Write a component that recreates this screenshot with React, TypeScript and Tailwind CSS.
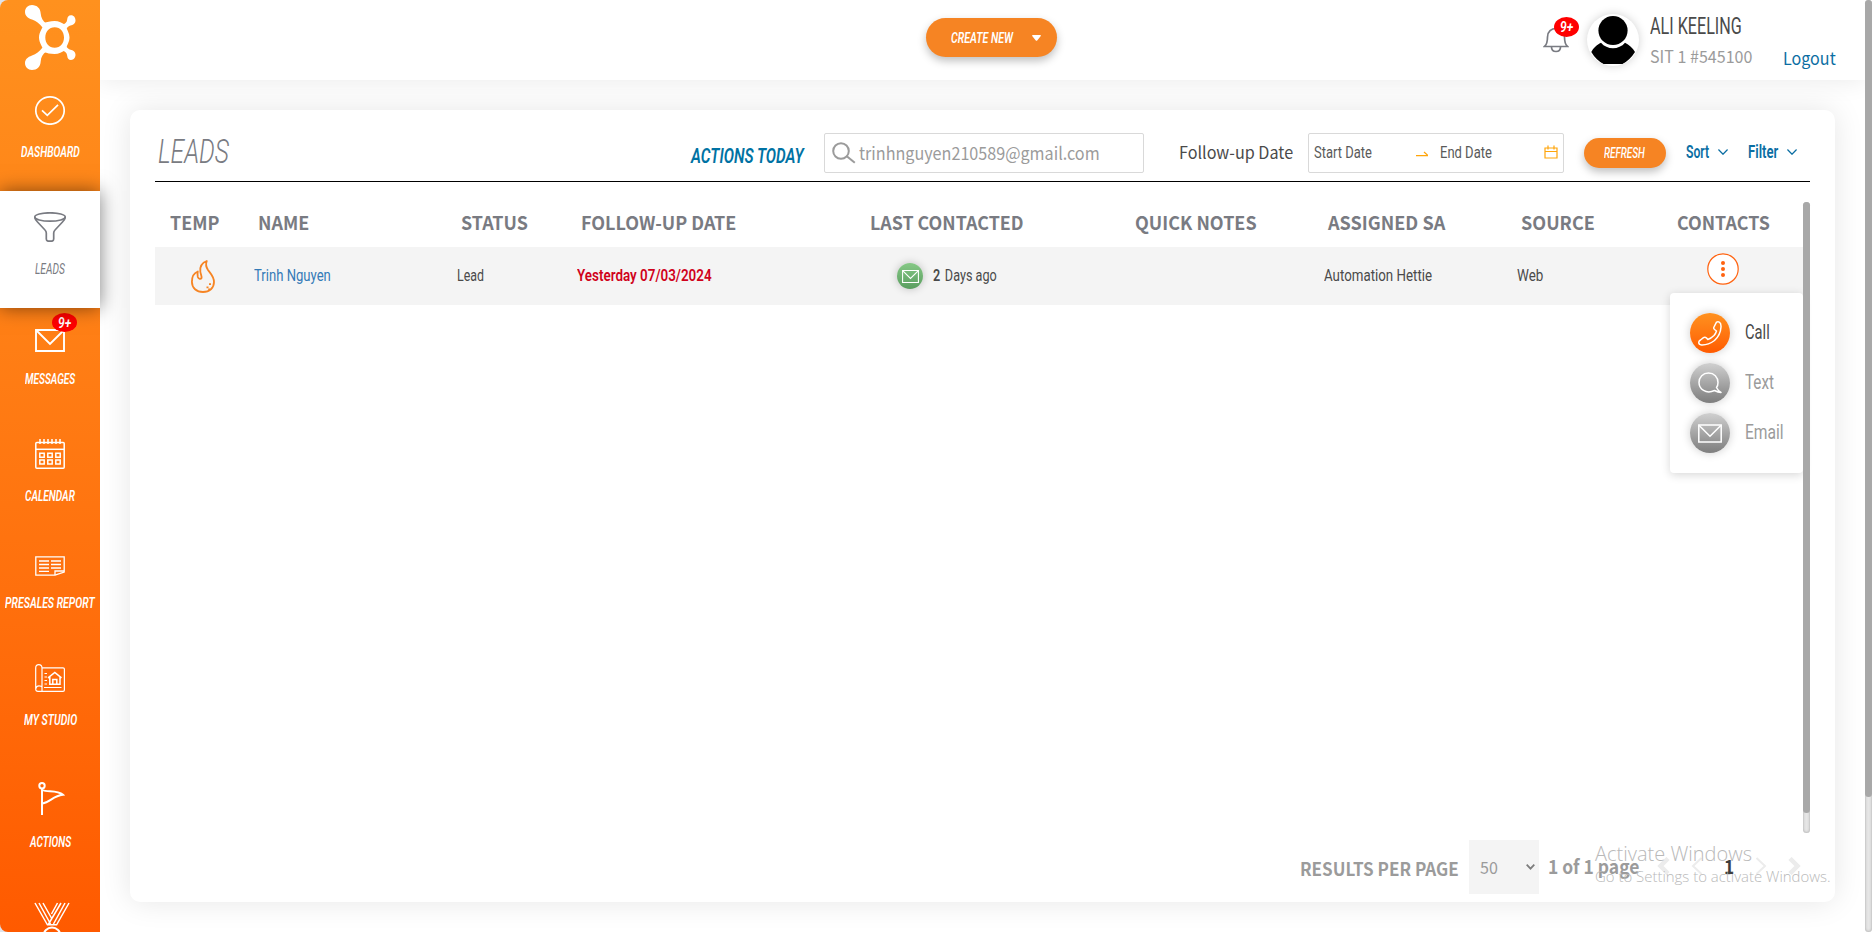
import { useLayoutEffect, useRef, useState } from "react";
import type { ReactNode } from "react";

const COND = "font-['Roboto',sans-serif]";
const SANS = "font-['Noto_Sans_CJK_SC',sans-serif]";

type FitProps = { w: number; className?: string; children: ReactNode };

// Squeezes a line of text horizontally to a given width
function Fit({ w, className = "", children }: FitProps) {
  const ref = useRef<HTMLSpanElement>(null);
  const [scale, setScale] = useState(1);

  useLayoutEffect(() => {
    if (ref.current) setScale(w / ref.current.offsetWidth);
  }, [w]);

  return (
    <span className={`block shrink-0 whitespace-nowrap leading-5 ${className}`} style={{ width: w }}>
      <span ref={ref} className="inline-block origin-left" style={{ transform: `scaleX(${scale})` }}>
        {children}
      </span>
    </span>
  );
}

function Logo() {
  return (
    <svg width="52" height="66" viewBox="0 0 52 66" fill="#fff">
      <path d="M7 0C12 0 15.500 3.500 15.700 8.500C16 13 18 16 21 18.200L17.500 22.500C14.500 18.500 11 16 7 14.600C2.500 13 0 10.500 0 7C0 3 3 0 7 0Z" />
      <path d="M7 65C12 65 15.500 61.500 15.700 56.500C16 52 18 49 21 46.800L17.500 42.500C14.500 46.500 11 49 7 50.400C2.500 52 0 54.500 0 58C0 62 3 65 7 65Z" />
      <path d="M46 10.200C49 10.200 50.500 12.700 50.500 15.500C50.500 18.500 48 20 45.500 20.500C43.500 21 42 22.500 41 24.500L36.500 20C40 19 42 17.500 42.200 14.500C42.400 12 43.500 10.200 46 10.200Z" />
      <path d="M46 55C49 55 50.500 52.300 50.500 49.800C50.500 46.800 48 45.300 45.500 44.800C43.500 44.300 42 42.800 41 40.800L36.500 45.300C40 46.300 42 47.800 42.200 50.800C42.400 53.300 43.500 55 46 55Z" />
      <path
        fillRule="evenodd"
        d="M29.500 16C34 16 37 18 40.500 20C42 25 44.500 28 44.500 32.500C44.500 37 42 40 40.500 45C37 47 34 49 29.500 49C25 49 22 48 19 47C18 42 14 38 14 32.500C14 27 18 23 19 18C22 17 25 16 29.500 16ZM29.700 22.200C24 22.200 20.300 27 20.300 32.500C20.300 38 24 42.800 29.700 42.800C35.400 42.800 39 38 39 32.500C39 27 35.400 22.200 29.700 22.200Z"
      />
    </svg>
  );
}

function DashboardIcon() {
  return (
    <svg width="30" height="30" viewBox="0 0 30 30" fill="none" stroke="#fff" strokeWidth="1.700">
      <ellipse cx="15" cy="15.500" rx="14.200" ry="13.700" />
      <path d="M7 15.300L12.300 20.300L23 9.800" />
    </svg>
  );
}

function FunnelIcon() {
  return (
    <svg width="32" height="30" viewBox="0 0 32 30" fill="none" stroke="#797b82" strokeWidth="1.700" strokeLinejoin="round">
      <ellipse cx="16" cy="5" rx="15.200" ry="4.200" />
      <path d="M.8 5C.8 7.200 2 8.500 3.500 10L11 18Q12.300 19.300 12.300 21V27Q12.300 29.200 14.500 29.200H17.500Q19.700 29.200 19.700 27V21Q19.700 19.300 21 18L28.500 10C30 8.500 31.200 7.200 31.200 5" />
    </svg>
  );
}

function EnvelopeIcon({ width = 30, height = 23 }: { width?: number; height?: number }) {
  return (
    <svg width={width} height={height} viewBox="0 0 30 23" fill="none" stroke="#fff" strokeWidth="1.900">
      <path d="M1 1H29V22H1Z" />
      <path d="M1.500 1.500L15 15L28.500 1.500" />
    </svg>
  );
}

function CalendarIcon() {
  return (
    <svg width="30" height="30" viewBox="0 0 30 30" fill="none" stroke="#fff" strokeWidth="1.500">
      <rect x=".8" y="3.500" width="28.400" height="25.700" rx="1" />
      <path d="M1 10.300H29" />
      <path d="M5 0V5M9 0V5M13 0V5M17 0V5M21 0V5M25 0V5" />
      <path d="M4.800 14.300H9.200V18.200H4.800ZM12.800 14.300H17.200V18.200H12.800ZM20.800 14.300H25.200V18.200H20.800ZM4.800 21H9.200V25H4.800ZM12.800 21H17.200V25H12.800ZM20.800 21H25.200V25H20.800Z" />
    </svg>
  );
}

function ReportIcon() {
  return (
    <svg width="30" height="20" viewBox="0 0 30 20" fill="none" stroke="#fff" strokeWidth="1.300">
      <path d="M.8.800H29.200V16L20 19.200H.8Z" />
      <path d="M20 19V15H29" />
      <path d="M4 5H14M16 5H26M4 8.500H14M16 8.500H26M4 12H14M16 12H26M4 15.300H14" />
    </svg>
  );
}

function StudioIcon() {
  return (
    <svg className="mb-px" width="30" height="28" viewBox="0 0 30 28" fill="none" stroke="#fff" strokeWidth="1.200">
      <path d="M7 3.800H28Q29.400 3.800 29.400 5V26Q29.400 27.300 28 27.300H3Q.7 27.300.7 25V4Q.7.700 3.800.700T7 4V23Q6.500 21.800 4 21.800T.9 24.500" />
      <path d="M7 23V27" />
      <path d="M9.500 9.500H12M9.500 13H12M9.500 16.500H12M9.500 20H12M9 23.500H26.500" />
      <path d="M13 13.800L19.800 8.500L26.500 13.800M14.800 13V20.200H25V13M17.800 20V15.500H21.800V20" strokeWidth="1.500" />
    </svg>
  );
}

function FlagIcon() {
  return (
    <svg width="30" height="33" viewBox="0 0 30 33" fill="none" stroke="#fff" strokeWidth="2">
      <circle cx="7" cy="3.800" r="2.700" />
      <path d="M7 6.500V33M7.500 8C12 10.500 22 7.500 28 12.800C18 13.800 15 20.500 7.500 21.500" />
    </svg>
  );
}

function MedalIcon() {
  return (
    <svg width="36" height="44" viewBox="0 0 36 44" fill="none" stroke="#fff" strokeWidth="1.500">
      <path d="M1 1L13.500 23M5 1L16.500 22M9 1L18 17M35 1L22.500 23M31 1L19.500 22M27 1L14 23M23.500 1L17.500 12M13 22.800H23" />
      <circle cx="18" cy="34" r="8.500" strokeWidth="2" />
    </svg>
  );
}

function Badge({ className = "" }: { className?: string }) {
  return (
    <span className={`absolute flex items-center justify-center rounded-[50%] bg-[#ff0000] text-white ${className}`}>
      <Fit w={13} className={`${COND} text-[14px] font-semibold italic`}>9+</Fit>
    </span>
  );
}

type NavItemProps = { label: string; w: number; className: string; active?: boolean; children: ReactNode };

function NavItem({ label, w, className, active, children }: NavItemProps) {
  return (
    <a
      className={`relative flex w-full shrink-0 flex-col items-center justify-end gap-[17px] pb-[29px] ${className} ${
        active ? "z-10 bg-white text-[#797b82] shadow-[0_0_18px_rgba(0,0,0,0.5)]" : "text-white"
      }`}
    >
      {children}
      <Fit w={w} className={`${COND} text-[15px] italic ${active ? "font-normal" : "font-semibold"}`}>{label}</Fit>
    </a>
  );
}

function Sidebar() {
  return (
    <div className="relative z-20 h-full w-[100px] shrink-0 bg-[#dfe3ea]">
      <nav className="flex h-full flex-col rounded-l-lg bg-linear-to-b from-[#ff911e] to-[#ff5a00]">
        <div className="h-[74px] shrink-0 pt-[5px] pl-[25px]">
          <Logo />
        </div>
        <NavItem label="DASHBOARD" w={59} className="h-[117px]"><DashboardIcon /></NavItem>
        <NavItem label="LEADS" w={30} className="h-[117px]" active><FunnelIcon /></NavItem>
        <NavItem label="MESSAGES" w={50} className="h-[110px]">
          <Badge className="top-[5px] left-[52px] h-[19px] w-[25px]" />
          <EnvelopeIcon />
        </NavItem>
        <NavItem label="CALENDAR" w={50} className="h-[117px]"><CalendarIcon /></NavItem>
        <NavItem label="PRESALES REPORT" w={90} className="h-[107px]"><ReportIcon /></NavItem>
        <NavItem label="MY STUDIO" w={53} className="h-[117px]"><StudioIcon /></NavItem>
        <NavItem label="ACTIONS" w={41} className="h-[122px]"><FlagIcon /></NavItem>
        <div className="min-h-0 flex-1 overflow-hidden pt-[21px] pl-[34px]">
          <MedalIcon />
        </div>
      </nav>
    </div>
  );
}

function Header() {
  return (
    <header className="relative z-10 flex h-20 shrink-0 bg-white pl-[826px] shadow-[0_0_24px_rgba(0,0,0,0.09)]">
      <button className="mt-[18px] flex h-[39px] w-[131px] shrink-0 items-center rounded-full bg-[#f68423] pl-[25px] text-white shadow-[0_4px_8px_rgba(0,0,0,0.25)]">
        <Fit w={62} className={`${COND} text-[15px] font-semibold italic`}>CREATE NEW</Fit>
        <svg className="ml-[19px]" width="9" height="6" viewBox="0 0 9 6" fill="#fff">
          <path d="M.6 0H8.400Q9.200.500 8.600 1.200L5.200 5.500Q4.500 6.200 3.800 5.500L.4 1.200Q-.2.500.6 0Z" />
        </svg>
      </button>
      <div className="relative ml-[486px] w-[44px] shrink-0 pt-[27px]">
        <svg width="26" height="26" viewBox="0 0 26 26" fill="none" stroke="#797b82" strokeWidth="1.700">
          <path d="M1.500 19.500H24.500C21.500 17 21.500 14 21.500 10C21.500 4.500 17.500 1.500 13 1.500S4.500 4.500 4.500 10C4.500 14 4.500 17 1.500 19.500Z" />
          <path d="M8.500 20C8.500 23 10.500 24.500 13 24.500S17.500 23 17.500 20" />
        </svg>
        <Badge className="top-[17px] left-[11px] h-5 w-[25px]" />
      </div>
      <div className="mt-[14px] size-[52px] shrink-0 overflow-hidden rounded-full bg-white shadow-[0_0_10px_rgba(0,0,0,0.18)]">
        <svg width="52" height="52" viewBox="0 0 52 52">
          <circle cx="26" cy="16.500" r="14.600" />
          <path d="M14 28.700C20 36 32 36 38 28.700C42 30.500 46 34.500 48 38Q43 46 35.500 50H16.500Q9 46 4.300 38C6 34.500 10 30.500 14 28.700Z" />
        </svg>
      </div>
      <div className="ml-[11px] w-[133px] shrink-0 pt-[17px]">
        <Fit w={92} className={`${COND} text-[23px] text-[#4a4a4a]`}>ALI KEELING</Fit>
        <Fit w={102} className={`${SANS} mt-[9px] text-[17px] text-[#9b9b9b]`}>SIT 1 #545100</Fit>
      </div>
      <Fit w={53} className={`${SANS} mt-[48px] text-[17px] text-[#0b6ea3]`}>Logout</Fit>
    </header>
  );
}

function Chevron() {
  return (
    <svg width="10" height="6" viewBox="0 0 10 6" fill="none" stroke="#0b6ea3" strokeWidth="1.300">
      <path d="M.4.500L5 5.200L9.600.500" />
    </svg>
  );
}

function Toolbar() {
  return (
    <div className="ml-[25px] flex h-[72px] w-[1655px] shrink-0 border-b border-black">
      <h1 className="w-[536px] shrink-0 pt-[31px] pl-[3px]">
        <Fit w={71} className={`${COND} text-[34px] font-[350] text-[#797b82] italic`}>LEADS</Fit>
      </h1>
      <Fit w={113} className={`${COND} mt-[36px] text-[21px] font-semibold text-[#0072a3] italic`}>ACTIONS TODAY</Fit>
      <div className="mt-[23px] ml-[20px] flex h-10 w-80 shrink-0 rounded-xs border border-[#d9d9d9] pl-[7px]">
        <svg className="mt-2 shrink-0" width="24" height="22" viewBox="0 0 24 22" fill="none" stroke="#9b9b9b" strokeWidth="2">
          <circle cx="9" cy="9" r="7.800" />
          <path d="M14.500 14L22.800 20.800" />
        </svg>
        <Fit w={241} className={`${SANS} mt-[9px] ml-[3px] text-[17.5px] text-[#9b9b9b]`}>trinhnguyen210589@gmail.com</Fit>
      </div>
      <Fit w={114} className={`${SANS} mt-[32px] ml-[35px] text-[17px] text-[#4a4a4a]`}>Follow-up Date</Fit>
      <div className="mt-[23px] ml-[15px] flex h-10 w-64 shrink-0 rounded-xs border border-[#d9d9d9] pl-[5px]">
        <Fit w={58} className={`${COND} mt-[8px] text-[17px] text-[#5a5a5a]`}>Start Date</Fit>
        <svg className="mt-[17px] ml-[44px]" width="12" height="6" viewBox="0 0 12 6" fill="none" stroke="#ffa50a" strokeWidth="1.200">
          <path d="M0 4.600H12L8 1" />
        </svg>
        <Fit w={52} className={`${COND} mt-[8px] ml-[12px] text-[17px] text-[#5a5a5a]`}>End Date</Fit>
        <svg className="mt-[11px] ml-[52px]" width="14" height="14" viewBox="0 0 14 14" fill="none" stroke="#ffa50a" strokeWidth="1.200">
          <path d="M1 3H13V13H1ZM1 6.500H13M4 .500V4.500M10 .500V4.500" />
        </svg>
      </div>
      <button className="mt-[28px] ml-[20px] flex h-[30px] w-[82px] shrink-0 items-center rounded-full bg-[#f68423] pl-[20px] text-white shadow-[0_4px_8px_rgba(0,0,0,0.25)]">
        <Fit w={41} className={`${COND} -mt-px text-[14px] font-medium italic`}>REFRESH</Fit>
      </button>
      <div className="mt-[32px] ml-[20px] flex h-5 items-center text-[#0b6ea3]">
        <Fit w={23} className={`${COND} text-[17.5px] font-semibold`}>Sort</Fit>
        <span className="ml-[9px]"><Chevron /></span>
        <Fit w={30} className={`${COND} ml-[20px] text-[17.5px] font-semibold`}>Filter</Fit>
        <span className="ml-[9px]"><Chevron /></span>
      </div>
    </div>
  );
}

const COLUMNS = [
  { label: "TEMP", w: 49, pad: "pl-[15px]" },
  { label: "NAME", w: 51, pad: "pl-[3px]" },
  { label: "STATUS", w: 67, pad: "pl-[4px]" },
  { label: "FOLLOW-UP DATE", w: 155, pad: "pl-[4px]" },
  { label: "LAST CONTACTED", w: 154, pad: "pl-[5px]" },
  { label: "QUICK NOTES", w: 122, pad: "pl-[5px]" },
  { label: "ASSIGNED SA", w: 117, pad: "pl-[3px]" },
  { label: "SOURCE", w: 74, pad: "pl-[3px]" },
  { label: "CONTACTS", w: 93, pad: "pl-[7px]" },
];

const GRID = "grid grid-cols-[100px_202px_120px_288px_265px_195px_193px_152px_133px]";
const CELL = `${COND} mt-[18px] text-[17px]`;

function ContactMenu() {
  return (
    <div className="absolute top-[46px] right-0 z-10 flex h-[180px] w-[133px] flex-col gap-[10px] rounded bg-white pt-5 pl-5 shadow-[0_2px_10px_rgba(0,0,0,0.16)]">
      <div className="flex items-center gap-[15px]">
        <span className="flex size-10 items-center justify-center rounded-full bg-linear-to-b from-[#ff911e] to-[#ff5a00] shadow-[0_0_10px_rgba(0,0,0,0.2)]">
          <svg width="24" height="25" viewBox="0 0 24 25" fill="none" stroke="#fff" strokeWidth="1.500" strokeLinejoin="round">
            <path d="M18.500 1.200Q20 .400 21.300 1.200Q23.200 2.200 23 6Q22.500 14 16.500 19.500Q10 24.300 3.500 24Q.500 23.500.800 21Q.9 20 2.500 19L5.500 16.700Q7 15.500 8.500 17L9.800 18.500Q13 17.500 16 14.500Q18 12 18.500 10L16.500 8.500Q15.200 7.500 16 6Z" />
          </svg>
        </span>
        <Fit w={25} className={`${COND} -mt-0.5 text-[20px] text-[#4a4a4a]`}>Call</Fit>
      </div>
      <div className="flex items-center gap-[15px]">
        <span className="flex size-10 items-center justify-center rounded-full bg-linear-to-b from-[#d0d0d0] to-[#7e7e7e] shadow-[0_0_10px_rgba(0,0,0,0.2)]">
          <svg width="24" height="22" viewBox="0 0 24 22" fill="none" stroke="#fff" strokeWidth="1.500" strokeLinejoin="round">
            <path d="M23 20.500C20.500 20.300 18.500 19.500 16.500 18.500C8 22.500 1 17 1 10.500C1 5 5 1 10.500 1S20 5 20 10.500C20 12.500 19.500 14.300 18.500 15.500C19.500 17.500 21 19.500 23 20.500Z" />
          </svg>
        </span>
        <Fit w={29} className={`${COND} -mt-0.5 text-[20px] text-[#9b9b9b]`}>Text</Fit>
      </div>
      <div className="flex items-center gap-[15px]">
        <span className="flex size-10 items-center justify-center rounded-full bg-linear-to-b from-[#d0d0d0] to-[#7e7e7e] shadow-[0_0_10px_rgba(0,0,0,0.2)]">
          <EnvelopeIcon width={24} height={19} />
        </span>
        <Fit w={39} className={`${COND} -mt-0.5 text-[20px] text-[#9b9b9b]`}>Email</Fit>
      </div>
    </div>
  );
}

function LeadsTable() {
  return (
    <div className="mt-5 ml-[25px] flex h-[631px] shrink-0">
      <div className="w-[1648px] shrink-0">
        <div className={`${GRID} h-[45px] pt-[10px]`}>
          {COLUMNS.map((col) => (
            <div key={col.label} className={col.pad}>
              <Fit w={col.w} className={`${SANS} text-[19px] font-bold text-[#797b82]`}>{col.label}</Fit>
            </div>
          ))}
        </div>
        <div className={`${GRID} relative h-[58px] bg-[#f4f4f4] text-[#4a4a4a]`}>
          <div className="pt-[13px] pl-[36px]">
            <svg width="24" height="33" viewBox="0 0 24 33" fill="none" stroke="#f68423" strokeWidth="1.800" strokeLinejoin="round">
              <path d="M15.800 1C10.500 3 8.800 7 9.300 11.500C9.600 14.500 11 16 10.500 18C9.800 19.500 7.500 19 6.800 17C6.300 15 6.500 13 6.800 11.500C3 13 .9 17.500.9 21.800C.9 28 5.500 32 12 32S23 28 23 22C23 16.500 20 14 17 10C15 7 14.500 4 15.800 1Z" />
              <path d="M18 24.200H20M15.500 27.300H17.500M17.300 29.500H19" />
            </svg>
          </div>
          <Fit w={77} className={`${CELL} -ml-px text-[#337ab7]`}>Trinh Nguyen</Fit>
          <Fit w={27} className={CELL}>Lead</Fit>
          <Fit w={135} className={`${CELL} font-semibold text-[#d0021b]`}>Yesterday 07/03/2024</Fit>
          <div className="flex pl-8">
            <span className="mt-[16px] flex size-[26px] items-center justify-center rounded-full bg-linear-to-b from-[#86c886] to-[#5a9e60] shadow-[0_0_8px_rgba(0,0,0,0.22)]">
              <EnvelopeIcon width={17} height={13} />
            </span>
            <Fit w={64} className={`${CELL} ml-[10px]`}><b className="mr-0.5 font-semibold">2</b> Days ago</Fit>
          </div>
          <div />
          <Fit w={108} className={`${CELL} -ml-px`}>Automation Hettie</Fit>
          <Fit w={26} className={`${CELL} -ml-px`}>Web</Fit>
          <div className="pt-[6px] pl-[37px]">
            <svg width="32" height="32" viewBox="0 0 32 32">
              <circle cx="16" cy="16" r="15.200" fill="#fff" stroke="#ff6310" strokeWidth="1.200" />
              <g fill="#ff6310">
                <circle cx="16" cy="10" r="2" />
                <circle cx="16" cy="16" r="2" />
                <circle cx="16" cy="22" r="2" />
              </g>
            </svg>
          </div>
          <ContactMenu />
        </div>
      </div>
      <div className="relative z-20 w-[7px] rounded-full bg-[#e6e6e6] shadow-[inset_0_0_3px_rgba(0,0,0,0.3)]">
        <div className="h-[611px] rounded-full bg-[#a8a8a8]" />
      </div>
    </div>
  );
}

function Pagination() {
  return (
    <div className="flex h-[69px] shrink-0 pl-[1170px]">
      <Fit w={159} className={`${SANS} mt-[25px] text-[18px] font-bold text-[#9b9b9b]`}>RESULTS PER PAGE</Fit>
      <div className="mt-[7px] ml-[10px] flex h-[54px] w-[70px] shrink-0 items-center bg-[#f4f4f4] pl-[11px]">
        <Fit w={18} className={`${SANS} text-[17px] text-[#9b9b9b]`}>50</Fit>
        <svg className="ml-[28px]" width="9" height="6" viewBox="0 0 9 6" fill="none" stroke="#7d7d7d" strokeWidth="1.800">
          <path d="M.7.700L4.500 4.600L8.300.700" />
        </svg>
      </div>
      <Fit w={91} className={`${SANS} mt-[23px] ml-[9px] text-[19px] font-bold text-[#9b9b9b]`}>1 of 1 page</Fit>
      <div className="mt-[24px] ml-[18px] flex h-[18px] items-center">
        <svg width="13" height="18" viewBox="0 0 13 18" fill="none" stroke="#ececec" strokeWidth="4.500"><path d="M11 1.500L3.500 9L11 16.500" /></svg>
        <svg className="ml-[21px]" width="12" height="18" viewBox="0 0 12 18" fill="none" stroke="#ececec" strokeWidth="2"><path d="M10.500 1L2 9L10.500 17" /></svg>
        <Fit w={10} className={`${SANS} ml-[21px] text-[19px] font-bold text-[#3c3c3c]`}>1</Fit>
        <svg className="ml-[21px]" width="12" height="18" viewBox="0 0 12 18" fill="none" stroke="#ececec" strokeWidth="2"><path d="M1.500 1L10 9L1.500 17" /></svg>
        <svg className="ml-[21px]" width="13" height="18" viewBox="0 0 13 18" fill="none" stroke="#ececec" strokeWidth="4.500"><path d="M2 1.500L9.500 9L2 16.500" /></svg>
      </div>
    </div>
  );
}

export default function App() {
  return (
    <div className="relative flex h-[932px] w-[1872px] overflow-hidden bg-white">
      <Sidebar />
      <div className="flex min-w-0 flex-1 flex-col">
        <Header />
        <main className="relative z-10 mt-[30px] ml-[30px] flex h-[792px] w-[1705px] flex-col rounded-[10px] bg-white shadow-[0_0_30px_rgba(0,0,0,0.1)]">
          <Toolbar />
          <LeadsTable />
          <Pagination />
        </main>
      </div>
      <div className="relative z-20 h-full w-[7px] shrink-0 rounded-full bg-[#e6e6e6] shadow-[inset_0_0_3px_rgba(0,0,0,0.3)]">
        <div className="h-[797px] rounded-full bg-[#a8a8a8]" />
      </div>

      {/* Activation notice floats over everything */}
      <div className="pointer-events-none absolute top-[844px] left-[1595px] z-30 text-[#b9b9b9]">
        <Fit w={157} className="font-['Open_Sans',sans-serif] text-[20px] font-light">Activate Windows</Fit>
        <Fit w={236} className="mt-[2px] font-['Open_Sans',sans-serif] text-[15px] font-[350]">Go to Settings to activate Windows.</Fit>
      </div>
    </div>
  );
}
